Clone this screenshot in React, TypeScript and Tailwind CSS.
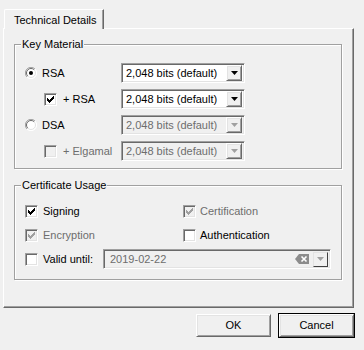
import React from "react";

const sunken =
  "border border-t-[#a0a0a0] border-l-[#a0a0a0] border-b-white border-r-white shadow-[inset_1px_1px_0_#696969,inset_-1px_-1px_0_#e3e3e3]";
const raised =
  "border border-t-white border-l-white border-r-[#696969] border-b-[#696969] shadow-[inset_1px_1px_0_#e3e3e3,inset_-1px_-1px_0_#a0a0a0]";

function Arrow({ disabled }: { disabled?: boolean }) {
  return (
    <svg width="7" height="4" viewBox="0 0 7 4">
      <polygon points="0,0 7,0 3.5,4" fill={disabled ? "#a0a0a0" : "#000"} />
    </svg>
  );
}

function Combo({ disabled }: { disabled?: boolean }) {
  return (
    <div
      className={`w-[124px] h-[20px] flex items-center p-[2px] ${sunken} ${
        disabled ? "bg-[#f0f0f0]" : "bg-white"
      }`}
    >
      <span
        className={`flex-1 pl-[2px] ${disabled ? "text-[#6d6d6d]" : "text-black"}`}
      >
        2,048 bits (default)
      </span>
      <div
        className={`w-[16px] h-[16px] flex items-center justify-center bg-[#f0f0f0] ${raised}`}
      >
        <Arrow disabled={disabled} />
      </div>
    </div>
  );
}

function Radio({ checked }: { checked?: boolean }) {
  return (
    <svg width="12" height="12" viewBox="0 0 12 12" className="shrink-0">
      <circle cx="6" cy="6" r="5.5" fill="white" />
      <path d="M10,2 A5.5,5.5 0 0 0 2,10" stroke="#a0a0a0" strokeWidth="1" fill="none" />
      <path d="M2,10 A5.5,5.5 0 0 0 10,2" stroke="#ffffff" strokeWidth="1" fill="none" />
      <path d="M9.2,2.8 A4.5,4.5 0 0 0 2.8,9.2" stroke="#696969" strokeWidth="1" fill="none" />
      <path d="M2.8,9.2 A4.5,4.5 0 0 0 9.2,2.8" stroke="#e3e3e3" strokeWidth="1" fill="none" />
      {checked && <circle cx="6" cy="6" r="2" fill="#000" />}
    </svg>
  );
}

function Check({
  checked,
  disabled,
}: {
  checked?: boolean;
  disabled?: boolean;
}) {
  return (
    <div
      className={`w-[13px] h-[13px] shrink-0 flex items-center justify-center ${sunken} ${
        disabled ? "bg-[#f0f0f0]" : "bg-white"
      }`}
    >
      {checked && (
        <svg width="7" height="7" viewBox="0 0 7 7">
          <path
            d="M0,2h1v1h1v1h1v-1h1v-1h1v-1h1v-1h1v3h-1v1h-1v1h-1v1h-1v1h-1v-1h-1v-1h-1z"
            fill={disabled ? "#a0a0a0" : "#000"}
          />
        </svg>
      )}
    </div>
  );
}

function Group({
  title,
  className,
  children,
}: {
  title: string;
  className: string;
  children: React.ReactNode;
}) {
  return (
    <div
      className={`relative ml-[10px] w-[328px] border border-[#a0a0a0] shadow-[inset_1px_1px_0_#fff,1px_1px_0_#fff] ${className}`}
    >
      <span className="absolute left-[6px] -top-[7px] px-[1px] bg-[#f0f0f0] leading-[13px]">
        {title}
      </span>
      {children}
    </div>
  );
}

export default function App() {
  return (
    <div className="w-[364px] h-[350px] bg-[#f0f0f0] text-[11px] leading-[13px] text-black font-['Liberation_Sans',Arial,sans-serif] overflow-hidden">
      <div className="relative z-10 mt-[9px] ml-[4px] w-[100px] h-[20px] -mb-[1px] bg-[#f0f0f0] border-l border-t border-l-white border-t-white border-r border-r-[#696969] shadow-[inset_-1px_0_0_#a0a0a0] rounded-tl-[2px] pl-[9px] pt-[4px]">
        Technical Details
      </div>
      <div className="ml-[3px] w-[351px] h-[280px] border border-l-white border-t-white border-r-[#696969] border-b-[#696969] shadow-[inset_-1px_-1px_0_#a0a0a0] pt-[15px]">
        <Group title="Key Material" className="h-[125px] pt-[18px] pl-[10px]">
          <div className="flex flex-col gap-[6px]">
            <div className="flex items-center h-[20px]">
              <div className="w-[96px] flex items-center">
                <Radio checked />
                <span className="ml-[5px]">RSA</span>
              </div>
              <Combo />
            </div>
            <div className="flex items-center h-[20px]">
              <div className="w-[96px] flex items-center pl-[19px]">
                <Check checked />
                <span className="ml-[6px]">+ RSA</span>
              </div>
              <Combo />
            </div>
            <div className="flex items-center h-[20px]">
              <div className="w-[96px] flex items-center">
                <Radio />
                <span className="ml-[5px]">DSA</span>
              </div>
              <Combo disabled />
            </div>
            <div className="flex items-center h-[20px]">
              <div className="w-[96px] flex items-center pl-[19px]">
                <Check disabled />
                <span className="ml-[6px] text-[#6d6d6d]">+ Elgamal</span>
              </div>
              <Combo disabled />
            </div>
          </div>
        </Group>
        <Group title="Certificate Usage" className="mt-[16px] h-[95px] pt-[15px] pl-[10px]">
          <div className="flex flex-col gap-[4px]">
            <div className="flex items-center h-[20px]">
              <div className="w-[158px] flex items-center">
                <Check checked />
                <span className="ml-[5px]">Signing</span>
              </div>
              <div className="flex items-center">
                <Check checked disabled />
                <span className="ml-[4px] text-[#6d6d6d]">Certification</span>
              </div>
            </div>
            <div className="flex items-center h-[20px]">
              <div className="w-[158px] flex items-center">
                <Check checked disabled />
                <span className="ml-[5px] text-[#6d6d6d]">Encryption</span>
              </div>
              <div className="flex items-center">
                <Check />
                <span className="ml-[4px]">Authentication</span>
              </div>
            </div>
            <div className="flex items-center h-[20px]">
              <div className="w-[78px] flex items-center">
                <Check />
                <span className="ml-[5px]">Valid until:</span>
              </div>
              <div
                className={`w-[228px] h-[20px] flex items-center p-[2px] bg-[#f0f0f0] ${sunken}`}
              >
                <span className="flex-1 pl-[4px] text-[#6d6d6d]">2019-02-22</span>
                <svg width="14" height="10" viewBox="0 0 14 10" className="mr-[4px]">
                  <polygon points="4,0 14,0 14,10 4,10 0,5" fill="#8c8c8c" />
                  <path d="M6.5,2.5 L11.5,7.5 M11.5,2.5 L6.5,7.5" stroke="#fff" strokeWidth="1.6" />
                </svg>
                <div className="w-[15px] h-[15px] flex items-center justify-center border border-t-[#e3e3e3] border-l-[#e3e3e3] border-r-[#404040] border-b-[#404040]">
                  <Arrow disabled />
                </div>
              </div>
            </div>
          </div>
        </Group>
      </div>
      <div className="flex justify-end items-center gap-[7px] pr-[9px] mt-[5px]">
        <button
          className={`w-[75px] h-[23px] bg-[#f0f0f0] flex items-center justify-center ${raised}`}
        >
          OK
        </button>
        <div className="w-[77px] h-[25px] border border-black">
          <button
            className={`w-full h-full bg-[#f0f0f0] flex items-center justify-center ${raised}`}
          >
            Cancel
          </button>
        </div>
      </div>
    </div>
  );
}
